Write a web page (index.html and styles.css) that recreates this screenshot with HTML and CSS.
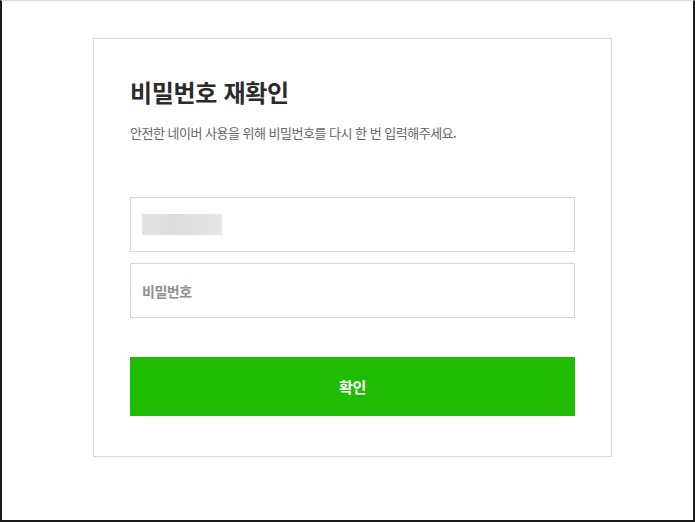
FILE: index.html
```html
<!DOCTYPE html>
<html lang="ko">
<head>
<meta charset="utf-8">
<title>비밀번호 재확인</title>
<link rel="stylesheet" href="styles.css">
</head>
<body>
<div class="frame">
  <div class="card">
    <h1 class="title">비밀번호 재확인</h1>
    <p class="desc">안전한 네이버 사용을 위해 비밀번호를 다시 한 번 입력해주세요.</p>
    <div class="fields">
      <div class="field"><span class="masked"></span></div>
      <div class="field"><span class="placeholder">비밀번호</span></div>
    </div>
    <button class="btn" type="button">확인</button>
  </div>
</div>
</body>
</html>
```

FILE: styles.css
```css
* { box-sizing: border-box; }
html, body { margin: 0; padding: 0; background: #fff; }
body {
  font-family: "Noto Sans CJK KR", "Noto Sans", sans-serif;
  width: 695px;
  height: 522px;
}
.frame {
  width: 695px;
  height: 522px;
  border-top: 1px solid #d8d8d8;
  border-left: 2px solid #1a1a1a;
  border-right: 2px solid #1a1a1a;
  border-bottom: 2px solid #1a1a1a;
  padding-top: 37px;
  padding-left: 91px;
}
.card {
  width: 519px;
  height: 419px;
  border: 1px solid #dadada;
  padding: 36px 36px 0 36px;
  display: flex;
  flex-direction: column;
}
.title {
  margin: 0;
  font-size: 24px;
  font-weight: 700;
  color: #2b2b2b;
  letter-spacing: -0.3px;
  line-height: 34px;
}
.desc {
  margin: 15px 0 0 0;
  font-size: 13px;
  color: #666;
  letter-spacing: -0.5px;
  line-height: 18px;
}
.fields {
  margin-top: 55px;
  display: flex;
  flex-direction: column;
  gap: 11px;
}
.field {
  height: 55px;
  border: 1px solid #d5d5d5;
  display: flex;
  align-items: center;
  padding-left: 11px;
}
.masked {
  display: block;
  width: 80px;
  height: 21px;
  background: linear-gradient(90deg, #e3e3e3 0%, #dcdcdc 40%, #e0e0e0 70%, #e6e6e6 100%);
}
.placeholder {
  font-size: 14px;
  font-weight: 700;
  color: #8f8f8f;
  letter-spacing: -0.5px;
}
.btn {
  margin-top: 39px;
  height: 59px;
  border: 0;
  background: #1fbc02;
  color: #fff;
  font-family: inherit;
  font-size: 15px;
  font-weight: 700;
  letter-spacing: -0.3px;
  cursor: pointer;
}
```
